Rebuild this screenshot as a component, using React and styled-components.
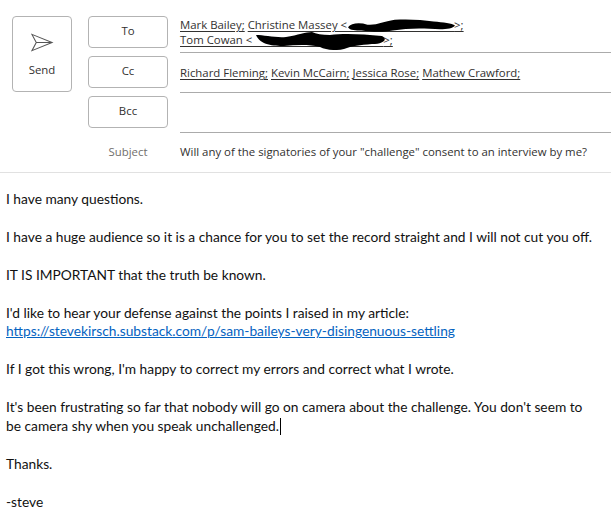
import React from "react";
import styled, { createGlobalStyle } from "styled-components";

const GlobalStyle = createGlobalStyle`
  html, body {
    margin: 0;
    padding: 0;
    background: #fff;
  }
`;

const App = () => {
  return (
    <Window>
      <GlobalStyle />
      <Header>
        <SendButton>
          <SendIcon viewBox="0 0 24 20">
            <path d="M1 1 L22 9.5 L1 18 L5.5 9.5 Z M5.5 9.5 L22 9.5" />
          </SendIcon>
          Send
        </SendButton>
        <Labels>
          <AddressButton>To</AddressButton>
          <AddressButton>Cc</AddressButton>
          <AddressButton>Bcc</AddressButton>
          <SubjectLabel>Subject</SubjectLabel>
        </Labels>
        <Fields>
          <ToField>
            <RecipientLine>
              <Recipient>Mark Bailey;</Recipient>{" "}
              <Recipient>
                Christine Massey &lt;
                <Redacted $width={107}>
                  <Blob viewBox="0 0 110 16" preserveAspectRatio="none">
                    <path d="M0 10 C3 5 12 4 20 7 C30 8 36 3 48 1 C62 0 76 1 88 3 C98 4 107 5 110 8 C107 13 96 13 84 12 C70 11 58 12 46 14 C34 17 22 15 14 14 C8 14 2 14 0 10 Z" />
                  </Blob>
                </Redacted>
                &gt;;
              </Recipient>
            </RecipientLine>
            <RecipientLine>
              <Recipient>
                Tom Cowan &lt;
                <Redacted $width={131}>
                  <TallBlob viewBox="0 0 130 18" preserveAspectRatio="none">
                    <path d="M0 3 C8 3 20 6 30 5 C42 3 50 0 56 0 C60 2 66 3 74 3 C88 1 106 2 126 4 C132 7 128 12 116 12 C104 13 96 14 88 17 C80 19 70 18 64 15 C52 12 40 13 28 14 C18 14 4 13 0 3 Z" />
                  </TallBlob>
                </Redacted>
                &gt;;
              </Recipient>
            </RecipientLine>
          </ToField>
          <Field>
            <RecipientLine>
              <Recipient>Richard Fleming;</Recipient>{" "}
              <Recipient>Kevin McCairn;</Recipient>{" "}
              <Recipient>Jessica Rose;</Recipient>{" "}
              <Recipient>Mathew Crawford;</Recipient>
            </RecipientLine>
          </Field>
          <Field />
          <SubjectField>
            Will any of the signatories of your "challenge" consent to an
            interview by me?
          </SubjectField>
        </Fields>
      </Header>
      <Body>
        <Para>I have many questions.</Para>
        <Para>
          I have a huge audience so it is a chance for you to set the record
          straight and I will not cut you off.
        </Para>
        <Para>IT IS IMPORTANT that the truth be known.</Para>
        <Para>
          I'd like to hear your defense against the points I raised in my
          article:
          <BodyLink>
            https://stevekirsch.substack.com/p/sam-baileys-very-disingenuous-settling
          </BodyLink>
        </Para>
        <Para>
          If I got this wrong, I'm happy to correct my errors and correct what I
          wrote.
        </Para>
        <Para>
          It's been frustrating so far that nobody will go on camera about the
          challenge. You don't seem to
          <br />
          be camera shy when you speak unchallenged.
          <Caret />
        </Para>
        <Para>Thanks.</Para>
        <Para>-steve</Para>
      </Body>
    </Window>
  );
};

export default App;

const Window = styled.div`
  width: 611px;
  height: 517px;
  overflow: hidden;
  background: #fff;
`;

const Header = styled.div`
  display: flex;
  align-items: flex-start;
  height: 156px;
  padding: 16px 0 0 12px;
  border-bottom: 1px solid #e1e1e1;
  font-family: "Open Sans", sans-serif;
  font-size: 11.4px;
  color: #323130;
`;

const SendButton = styled.div`
  display: flex;
  flex-direction: column;
  align-items: center;
  box-sizing: border-box;
  width: 60px;
  height: 76px;
  padding-top: 16px;
  margin-right: 16px;
  border: 1px solid #b3b3b3;
  border-radius: 4px;
`;

const SendIcon = styled.svg`
  width: 23px;
  height: 20px;
  margin-bottom: 9px;
  fill: none;
  stroke: #555;
  stroke-width: 1.1;
`;

const Labels = styled.div`
  display: flex;
  flex-direction: column;
  gap: 8px;
  width: 80px;
  margin-right: 12px;
`;

const AddressButton = styled.div`
  display: flex;
  align-items: center;
  justify-content: center;
  box-sizing: border-box;
  height: 32px;
  padding-bottom: 3px;
  border: 1px solid #b3b3b3;
  border-radius: 4px;
`;

const SubjectLabel = styled.div`
  height: 32px;
  line-height: 32px;
  text-align: center;
  color: #706e6c;
`;

const Fields = styled.div`
  flex: 1;
  display: flex;
  flex-direction: column;
`;

const Field = styled.div`
  box-sizing: border-box;
  height: 40px;
  display: flex;
  flex-direction: column;
  justify-content: center;
  border-bottom: 1px solid #ababab;
`;

const ToField = styled(Field)`
  height: 37px;
  justify-content: flex-start;
  padding-top: 1px;
`;

const SubjectField = styled.div`
  height: 40px;
  line-height: 38px;
  white-space: nowrap;
`;

const RecipientLine = styled.div`
  line-height: 15px;
  white-space: nowrap;
`;

const Recipient = styled.span`
  text-decoration: underline;
  text-underline-offset: 2px;
`;

const Redacted = styled.span`
  position: relative;
  display: inline-block;
  width: ${(props) => props.$width}px;
  height: 10px;

  &::after {
    content: "";
    position: absolute;
    left: 0;
    right: 0;
    top: 12px;
    height: 1px;
    background: #323130;
  }
`;

const Blob = styled.svg`
  position: absolute;
  z-index: 1;
  left: 1px;
  top: 0;
  width: 100%;
  height: 13px;
  fill: #000;
`;

const TallBlob = styled(Blob)`
  left: 4px;
  top: -2px;
  width: 130px;
  height: 18px;
`;

const Body = styled.div`
  padding: 16px 0 0 6px;
  font-family: "Lato", sans-serif;
  font-size: 13.75px;
  line-height: 19px;
  color: #111;
  white-space: nowrap;
`;

const Para = styled.p`
  margin: 0 0 19px;
`;

const BodyLink = styled.a`
  display: block;
  margin-top: -1px;
  color: #0563c1;
  text-decoration: underline;
`;

const Caret = styled.span`
  display: inline-block;
  width: 1px;
  height: 17px;
  margin-left: 1px;
  background: #000;
  vertical-align: -4px;
`;
